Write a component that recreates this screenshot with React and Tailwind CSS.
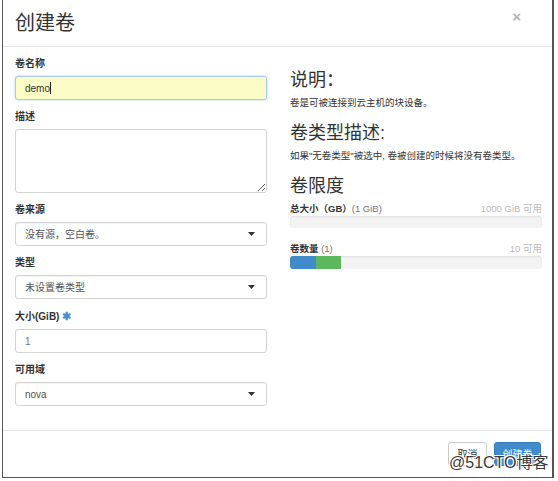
import React from "react";

const FONT = { fontFamily: '"Liberation Sans", "Noto Sans CJK SC", sans-serif' };

function Label({ children }) {
  return (
    <div className="text-[10px] leading-[14px] font-bold text-[#333] mb-[5px]">{children}</div>
  );
}

function Select({ value }) {
  return (
    <div className="h-[24px] w-full border border-[#d4d4d4] rounded-[3px] bg-white flex items-center justify-between pl-[9px] pr-[11px] shadow-[inset_0_1px_1px_rgba(0,0,0,0.05)]">
      <span className="text-[10px] text-[#555]">{value}</span>
      <svg width="7" height="4" viewBox="0 0 7 4">
        <path d="M0 0 L7 0 L3.5 4 Z" fill="#333" />
      </svg>
    </div>
  );
}

function Bar({ children, h }) {
  return (
    <div className={`w-full ${h} bg-[#f3f3f3] rounded-[3px] overflow-hidden flex shadow-[inset_0_1px_2px_rgba(0,0,0,0.08)]`}>
      {children}
    </div>
  );
}

export default function App() {
  return (
    <div className="w-[558px] h-[481px] bg-white relative" style={FONT}>
      <div className="ml-[2px] w-[552px] border-l border-r-2 border-b border-[#555] bg-white">
        {/* header */}
        <div className="h-[47px] border-b border-[#e5e5e5] flex items-center justify-between pl-[12px] pr-[31px]">
          <div className="text-[20px] text-[#333] leading-none">创建卷</div>
          <div className="text-[15px] font-bold text-[#b5b5b5] leading-none -mt-[14px]">×</div>
        </div>
        {/* body */}
        <div className="pt-[10px] pb-[14px] pl-[12px] flex gap-[23px]">
          <div className="w-[252px] flex flex-col">
            <Label>卷名称</Label>
            <div className="h-[24px] border border-[#a9c8ea] rounded-[3px] bg-[#fbfcc6] flex items-center pl-[9px] shadow-[0_0_3px_rgba(102,175,233,0.5)]">
              <span className="text-[10px] text-[#333]">demo</span>
              <span className="w-px h-[12px] bg-[#222]"></span>
            </div>
            <div className="h-[10px]" />
            <Label>描述</Label>
            <textarea
              className="h-[64px] w-full border border-[#d4d4d4] rounded-[3px] bg-white block outline-none"
              style={{ resize: "vertical" }}
              defaultValue=""
            />
            <div className="h-[10px]" />
            <Label>卷来源</Label>
            <Select value="没有源，空白卷。" />
            <div className="h-[10px]" />
            <Label>类型</Label>
            <Select value="未设置卷类型" />
            <div className="h-[10px]" />
            <Label>
              大小(GiB) <span className="text-[#4a8fd4] text-[11px]">✱</span>
            </Label>
            <div className="h-[24px] border border-[#d4d4d4] rounded-[3px] bg-white flex items-center pl-[9px]">
              <span className="text-[10px] text-[#777]">1</span>
            </div>
            <div className="h-[10px]" />
            <Label>可用域</Label>
            <Select value="nova" />
            <div className="h-[10px]" />
          </div>
          <div className="w-[252px] flex flex-col">
            <div className="mt-[13px] text-[18px] leading-[20px] text-[#333]">说明：</div>
            <div className="mt-[7px] text-[9.5px] leading-[12px] text-[#333]">卷是可被连接到云主机的块设备。</div>
            <div className="mt-[14px] text-[18px] leading-[20px] text-[#333]">卷类型描述:</div>
            <div className="mt-[7px] text-[9.5px] leading-[12px] text-[#333]">如果"无卷类型"被选中, 卷被创建的时候将没有卷类型。</div>
            <div className="mt-[14px] text-[18px] leading-[20px] text-[#333]">卷限度</div>
            <div className="mt-[7px] flex justify-between text-[9.5px] leading-[12px]">
              <span>
                <span className="font-bold text-[#333]">总大小（GB）</span>
                <span className="text-[#777]">(1 GiB)</span>
              </span>
              <span className="text-[#bbb]">1000 GiB 可用</span>
            </div>
            <div className="mt-[1px]">
              <Bar h="h-[12px]" />
            </div>
            <div className="mt-[15px] flex justify-between text-[9.5px] leading-[12px]">
              <span>
                <span className="font-bold text-[#333]">卷数量</span>
                <span className="text-[#777]"> (1)</span>
              </span>
              <span className="text-[#bbb]">10 可用</span>
            </div>
            <div className="mt-[1px]">
              <Bar h="h-[13px]">
                <div className="w-[26px] h-full bg-[#428bca]" />
                <div className="w-[25px] h-full bg-[#5cb85c]" />
              </Bar>
            </div>
          </div>
        </div>
        {/* footer */}
        <div className="border-t border-[#e5e5e5] pt-[11px] pb-[11px] pr-[11px] flex justify-end gap-[7px]">
          <button className="h-[24px] w-[39px] border border-[#ccc] rounded-[3px] bg-white text-[10px] text-[#333]">取消</button>
          <button className="h-[24px] w-[47px] border border-[#357ebd] rounded-[3px] bg-[#428bca] text-[10px] text-white">创建卷</button>
        </div>
      </div>
      <div
        className="absolute left-[449px] top-[453px] text-[16px] text-[#3a3a3a] leading-[20px]"
        style={{ textShadow: "1px 1px 0 #fff, -1px -1px 0 #fff, 1px -1px 0 #fff, -1px 1px 0 #fff" }}
      >
        @51CTO博客
      </div>
    </div>
  );
}
